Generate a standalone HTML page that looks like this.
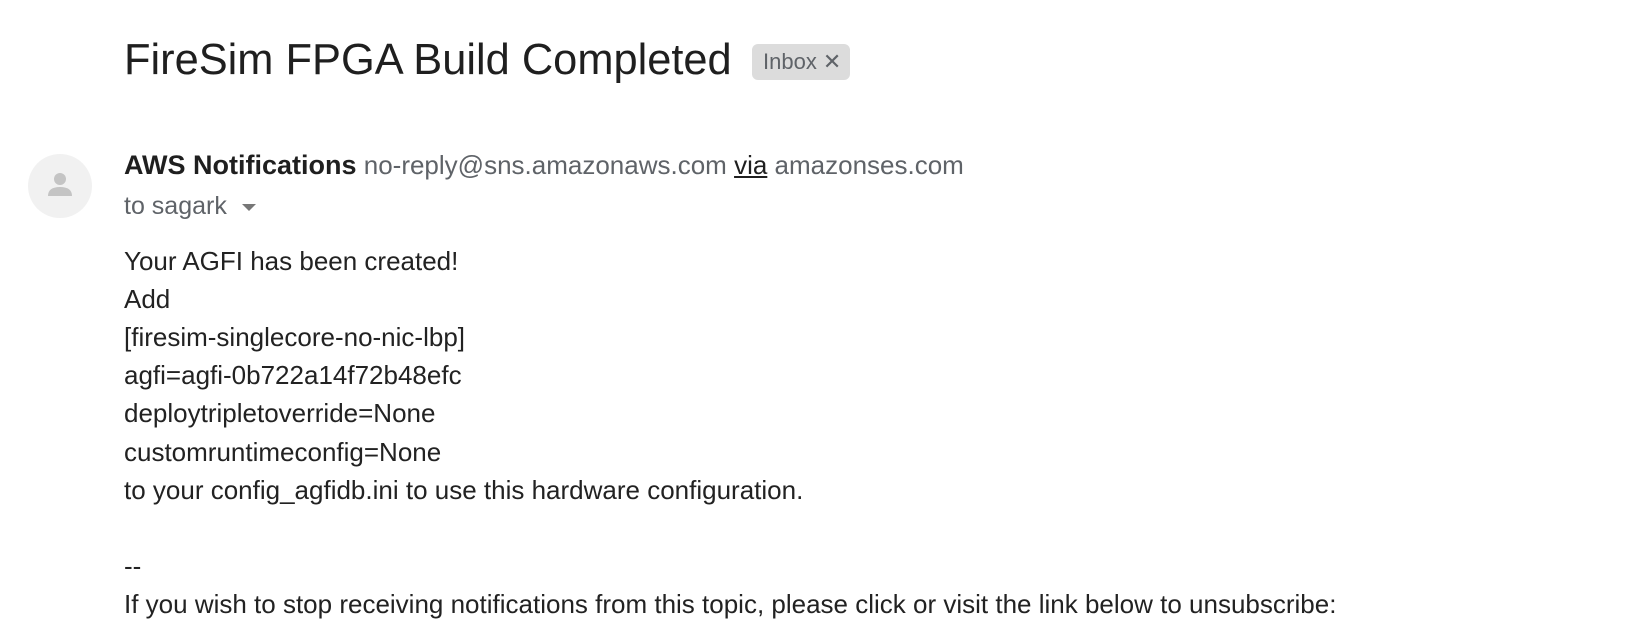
<!DOCTYPE html>
<html><head><meta charset="utf-8"><style>
body{margin:0;width:1632px;height:626px;background:#fff;font-family:"Liberation Sans",Arial,sans-serif;position:relative;overflow:hidden}
.t{position:absolute;white-space:nowrap}
.title{left:124px;top:36px;font-size:43.4px;color:#1f1f1f}
.chip{left:752px;top:44px;width:98px;height:36px;background:#dcdcdc;border-radius:6px;font-size:22px;color:#5f6368;line-height:36px;box-sizing:border-box;padding-left:11px}
.av{position:absolute;left:28px;top:154px;width:64px;height:64px;border-radius:50%;background:#f1f1f1}
.sender{left:124px;top:150px;font-size:26px;color:#5f6368}
.sender b{color:#1f1f1f;font-size:27px}
.to{left:124px;top:192px;font-size:25px;color:#5f6368}
.body{left:124px;top:241.5px;font-size:26px;line-height:38.2px;color:#222}
</style></head><body>
<div class="t title">FireSim FPGA Build Completed</div>
<div class="t chip">Inbox ✕</div>
<div class="av"><svg width="64" height="64" viewBox="0 0 64 64"><circle cx="32" cy="25" r="6" fill="#c4c4c4"/><path d="M20 42 Q20 33 32 33 Q44 33 44 42 Z" fill="#c4c4c4"/></svg></div>
<div class="t sender"><b>AWS Notifications</b> no-reply@sns.amazonaws.com <u style="color:#1f1f1f">via</u> amazonses.com</div>
<div class="t to">to sagark <span style="display:inline-block;width:0;height:0;border-left:7px solid transparent;border-right:7px solid transparent;border-top:7px solid #777;margin-left:8px;vertical-align:middle"></span></div>
<div class="t body">Your AGFI has been created!<br>Add<br>[firesim-singlecore-no-nic-lbp]<br>agfi=agfi-0b722a14f72b48efc<br>deploytripletoverride=None<br>customruntimeconfig=None<br>to your config_agfidb.ini to use this hardware configuration.<br><br>--<br>If you wish to stop receiving notifications from this topic, please click or visit the link below to unsubscribe:</div>
</body></html>
